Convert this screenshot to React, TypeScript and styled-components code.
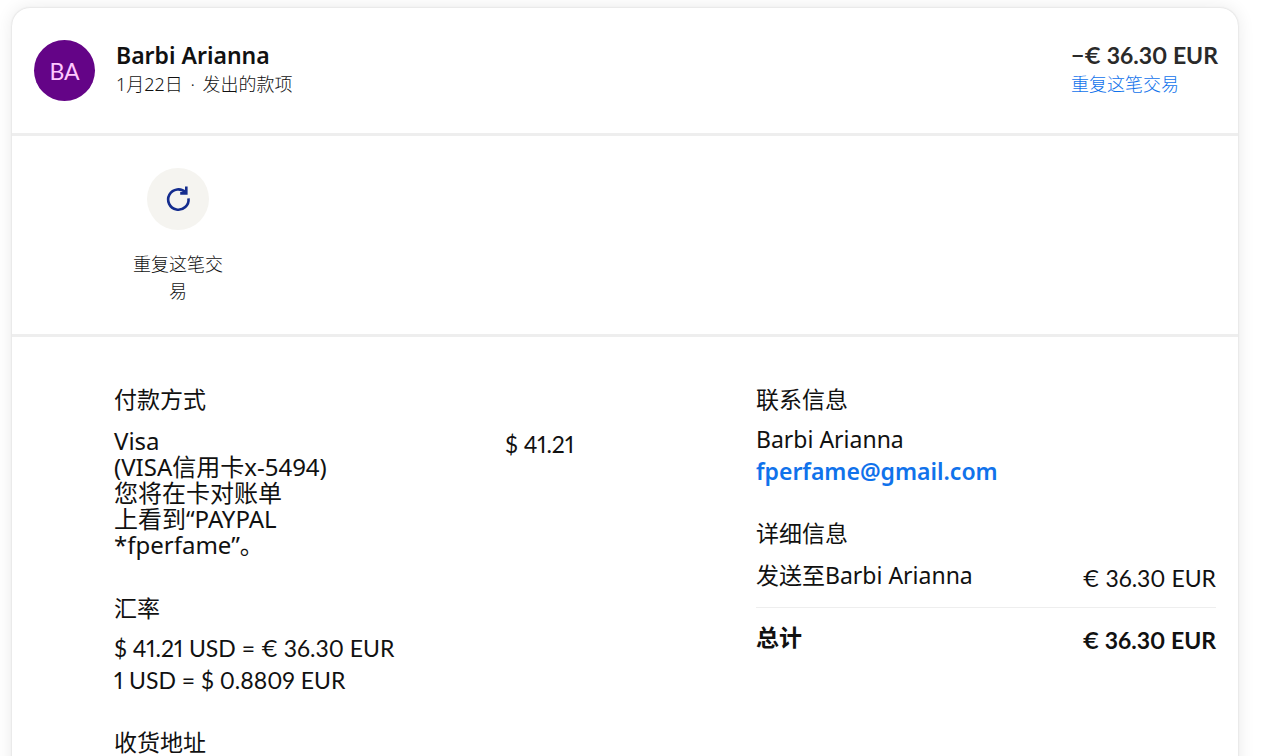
import React from "react";
import styled, { createGlobalStyle } from "styled-components";

const textFont = `"Noto Sans", "Noto Sans CJK SC", sans-serif`;
const amountFont = `Lato, "Noto Sans CJK SC", sans-serif`;

const GlobalStyle = createGlobalStyle`
  *, *::before, *::after { box-sizing: border-box; }
  body {
    margin: 0;
    background: #fff;
    color: #111;
    font-family: ${textFont};
    font-size: 23px;
    font-weight: 400;
  }
  h1, h2, p, dl, dd, dt { margin: 0; font: inherit; }
`;

const Page = styled.main`
  padding: 8px 42px 0 12px;
`;

const Card = styled.article`
  min-height: calc(100vh + 16px);
  border-radius: 18px 18px 0 0;
  background: #fff;
  box-shadow: 0 0 2px #ccc, 0 0 18px rgba(0, 0, 0, 0.09);
`;

const Header = styled.header`
  display: flex;
  align-items: flex-start;
  padding: 32px 20px 32px 22px;
  border-bottom: 3px solid #eee;
`;

const Avatar = styled.div`
  display: grid;
  place-items: center;
  width: 61px;
  height: 61px;
  margin-right: 21px;
  border-radius: 50%;
  background: #640487;
  color: #ffc8ff;
  font-family: ${amountFont};
  font-size: 23px;
`;

const HeaderText = styled.div<{ $push?: boolean }>`
  margin-left: ${(p) => (p.$push ? "auto" : "0")};
`;

const Title = styled.h1`
  font-size: 23px;
  font-weight: 600;
  line-height: 30px;
`;

const HeaderAmount = styled.p`
  font-family: ${amountFont};
  font-size: 23px;
  font-weight: 700;
  line-height: 30px;
  color: #2a2a2a;
  font-variant-numeric: proportional-nums;
`;

const Subtitle = styled.p`
  font-size: 18px;
  font-weight: 300;
  line-height: 28px;
`;

const Dot = styled.span`
  margin: 0 3px;
`;

const RepeatLink = styled.a`
  display: block;
  color: #1072eb;
  font-size: 18px;
  font-weight: 300;
  line-height: 28px;
  text-decoration: none;
`;

const Actions = styled.section`
  padding: 32px 110px 29px;
  border-bottom: 3px solid #eee;
`;

const ActionButton = styled.button`
  display: flex;
  flex-direction: column;
  align-items: center;
  gap: 21px;
  width: 112px;
  padding: 0 8px;
  border: 0;
  background: none;
  color: #111;
  font-family: inherit;
  font-size: 18px;
  font-weight: 300;
  line-height: 27px;
  cursor: pointer;
`;

const ActionIcon = styled.span`
  display: grid;
  place-items: center;
  width: 62px;
  height: 62px;
  border-radius: 50%;
  background: #f5f4f0;
`;

const Details = styled.div`
  display: grid;
  grid-template-columns: 1fr 1fr;
  gap: 182px;
  padding: 46px 22px 0 102px;
`;

const Column = styled.div`
  display: flex;
  flex-direction: column;
  gap: 30px;
`;

const SectionTitle = styled.h2`
  margin-bottom: 8px;
  font-size: 23px;
  line-height: 32px;
`;

const Line = styled.p`
  line-height: 32px;
`;

const RateLine = styled(Line)`
  font-family: ${amountFont};
  font-variant-numeric: proportional-nums;
`;

const Entries = styled.dl`
  padding: 2px 0 4px;
`;

const Row = styled.div<{ $strong?: boolean }>`
  display: flex;
  justify-content: space-between;
  align-items: flex-start;
  line-height: 32px;
  font-weight: ${(p) => (p.$strong ? 700 : 400)};
`;

const TotalRow = styled(Row)`
  margin-top: 13px;
  padding-top: 13px;
  border-top: 1px solid #eee;
`;

const Source = styled.dt`
  padding-top: 3px;
  font-size: 24px;
  line-height: 26px;
`;

const Amount = styled.dd`
  padding-top: 3px;
  font-family: ${amountFont};
  font-variant-numeric: proportional-nums;
  white-space: nowrap;
`;

const EmailLink = styled.a`
  color: #1072eb;
  font-weight: 600;
  text-decoration: none;
`;

function RepeatIcon() {
  return (
    <svg width="26" height="28" viewBox="0 0 26 28" fill="none" stroke="#142c8e" strokeWidth="2.6" aria-hidden="true">
      <path d="M23.5 13.4A10.2 10.2 0 1 1 20.8 7.6" />
      <path d="M21.3 1.6V8.4H15.2" />
    </svg>
  );
}

export default function App() {
  return (
    <>
      <GlobalStyle />
      <Page>
        <Card>
          <Header>
            <Avatar>BA</Avatar>
            <HeaderText>
              <Title>Barbi Arianna</Title>
              <Subtitle>
                1月22日 <Dot>·</Dot> 发出的款项
              </Subtitle>
            </HeaderText>
            <HeaderText $push>
              <HeaderAmount>−€ 36.30 EUR</HeaderAmount>
              <RepeatLink href="#repeat">重复这笔交易</RepeatLink>
            </HeaderText>
          </Header>
          <Actions>
            <ActionButton type="button">
              <ActionIcon>
                <RepeatIcon />
              </ActionIcon>
              重复这笔交易
            </ActionButton>
          </Actions>
          <Details>
            <Column>
              <section>
                <SectionTitle>付款方式</SectionTitle>
                <Entries>
                  <Row>
                    <Source>
                      Visa
                      <br />
                      (VISA信用卡x-5494)
                      <br />
                      您将在卡对账单
                      <br />
                      上看到“PAYPAL
                      <br />
                      *fperfame”。
                    </Source>
                    <Amount>$ 41.21</Amount>
                  </Row>
                </Entries>
              </section>
              <section>
                <SectionTitle>汇率</SectionTitle>
                <RateLine>$ 41.21 USD = € 36.30 EUR</RateLine>
                <RateLine>1 USD = $ 0.8809 EUR</RateLine>
              </section>
              <section>
                <SectionTitle>收货地址</SectionTitle>
              </section>
            </Column>
            <Column>
              <section>
                <SectionTitle>联系信息</SectionTitle>
                <Line>Barbi Arianna</Line>
                <Line>
                  <EmailLink href="mailto:fperfame@gmail.com">fperfame@gmail.com</EmailLink>
                </Line>
              </section>
              <section>
                <SectionTitle>详细信息</SectionTitle>
                <Entries>
                  <Row>
                    <dt>发送至Barbi Arianna</dt>
                    <Amount>€ 36.30 EUR</Amount>
                  </Row>
                  <TotalRow $strong>
                    <dt>总计</dt>
                    <Amount>€ 36.30 EUR</Amount>
                  </TotalRow>
                </Entries>
              </section>
            </Column>
          </Details>
        </Card>
      </Page>
    </>
  );
}
